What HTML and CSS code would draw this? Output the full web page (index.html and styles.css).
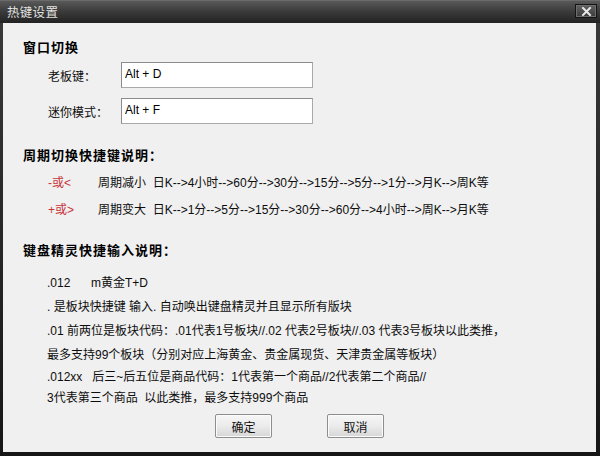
FILE: index.html
```html
<!DOCTYPE html>
<html lang="zh-CN">
<head>
<meta charset="utf-8">
<title>热键设置</title>
<link rel="stylesheet" href="styles.css">
</head>
<body>
<div class="window">
  <div class="titlebar">
    <span class="title">热键设置</span>
    <span class="close">
      <svg width="11" height="9" viewBox="0 0 11 9"><path d="M2 1 L9 8 M9 1 L2 8" stroke="#e8e8e8" stroke-width="2" stroke-linecap="square"/></svg>
    </span>
  </div>
  <div class="content">
    <div class="heading">窗口切换</div>
    <div class="field first">
      <span class="label">老板键：</span>
      <div class="input">Alt + D</div>
    </div>
    <div class="field">
      <span class="label">迷你模式：</span>
      <div class="input">Alt + F</div>
    </div>

    <div class="heading h2">周期切换快捷键说明：</div>
    <div class="period first">
      <span class="key">-或&lt;</span>
      <span>周期减小&nbsp;&nbsp;日K--&gt;4小时--&gt;60分--&gt;30分--&gt;15分--&gt;5分--&gt;1分--&gt;月K--&gt;周K等</span>
    </div>
    <div class="period">
      <span class="key">+或&gt;</span>
      <span>周期变大&nbsp;&nbsp;日K--&gt;1分--&gt;5分--&gt;15分--&gt;30分--&gt;60分--&gt;4小时--&gt;周K--&gt;月K等</span>
    </div>

    <div class="heading h3">键盘精灵快捷输入说明：</div>
    <div class="notes">
      <div class="line"><span class="code">.012</span>m黄金T+D</div>
      <div class="line">. 是板块快捷键 输入. 自动唤出键盘精灵并且显示所有版块</div>
      <div class="line">.01 前两位是板块代码：.01代表1号板块//.02 代表2号板块//.03 代表3号板块以此类推，</div>
      <div class="line">最多支持99个板块（分别对应上海黄金、贵金属现货、天津贵金属等板块）</div>
      <div class="line short">.012xx&nbsp;&nbsp;&nbsp;后三~后五位是商品代码：1代表第一个商品//2代表第二个商品//</div>
      <div class="line short">3代表第三个商品&nbsp;&nbsp;以此类推，最多支持999个商品</div>
    </div>

    <div class="buttons">
      <button class="btn">确定</button>
      <button class="btn">取消</button>
    </div>
  </div>
</div>
</body>
</html>
```

FILE: styles.css
```css
html, body {
  margin: 0;
  padding: 0;
}
body {
  width: 600px;
  height: 456px;
  overflow: hidden;
  background: #1c1c1c;
  font-family: "Liberation Sans", "Noto Sans CJK SC", sans-serif;
  font-size: 12px;
  color: #0d0d0d;
}
.window {
  width: 600px;
  height: 456px;
  display: flex;
  flex-direction: column;
  background: linear-gradient(#3a3a3a, #161616);
}
.titlebar {
  height: 23px;
  flex: none;
  display: flex;
  align-items: center;
  justify-content: space-between;
  padding: 0 3px 0 7px;
  background: linear-gradient(#595959 0%, #3c3c3c 45%, #222222 100%);
  border-top: 1px solid #6a6a6a;
  box-sizing: border-box;
}
.title {
  color: #e2e2e2;
  font-family: "Noto Sans CJK SC", sans-serif;
  font-size: 12.5px;
  letter-spacing: 0.3px;
  line-height: 20px;
}
.close {
  width: 22px;
  height: 14px;
  margin-top: -2px;
  box-sizing: border-box;
  border: 1px solid #141414;
  box-shadow: inset 0 0 0 1px #6e6e6e;
  background: linear-gradient(#626262, #3a3a3a);
  display: flex;
  align-items: center;
  justify-content: center;
}
.close svg {
  display: block;
}
.content {
  flex: 1;
  margin: 0 4px 4px 3px;
  background: #f0f0f0;
  padding: 14px 0 0 20px;
  box-sizing: border-box;
}
.heading {
  font-family: "Noto Sans CJK SC", sans-serif;
  font-weight: bold;
  font-size: 13px;
  letter-spacing: 1px;
  line-height: 20px;
  height: 20px;
  color: #000;
}
.h2 {
  margin-top: 21px;
}
.h3 {
  margin-top: 16px;
}
.field {
  display: flex;
  align-items: center;
  margin-top: 10px;
  padding-left: 25px;
}
.field.first {
  margin-top: 5px;
}
.label {
  width: 73px;
  flex: none;
  font-family: "Noto Sans CJK SC", sans-serif;
  font-size: 12px;
}
.input {
  width: 192px;
  height: 26px;
  box-sizing: border-box;
  background: #fff;
  border: 1px solid #a9a9a9;
  border-top-color: #8c8c8c;
  border-left-color: #8c8c8c;
  padding-left: 3px;
  line-height: 22px;
  font-size: 12px;
  color: #000;
}
.period {
  display: flex;
  line-height: 27px;
  height: 27px;
  padding-left: 25px;
  white-space: nowrap;
}
.period.first {
  margin-top: 5px;
}
.key {
  width: 50px;
  flex: none;
  color: #c8353a;
}
.notes {
  margin-top: 11px;
  padding-left: 24px;
}
.line {
  line-height: 24px;
  height: 24px;
  white-space: nowrap;
}
.line.short {
  line-height: 21px;
  height: 21px;
}
.code {
  display: inline-block;
  width: 44px;
}
.buttons {
  display: flex;
  justify-content: center;
  gap: 55px;
  margin-top: 5px;
  margin-left: -20px;
}
.btn {
  width: 57px;
  height: 24px;
  box-sizing: border-box;
  border: 1px solid #8e8e8e;
  border-radius: 2px;
  background: linear-gradient(#f6f6f6 0%, #ebebeb 50%, #d6d6d6 100%);
  box-shadow: inset 0 0 0 1px #fbfbfb;
  font-family: "Noto Sans CJK SC", sans-serif;
  font-size: 12px;
  color: #111;
  padding: 0;
}
```
